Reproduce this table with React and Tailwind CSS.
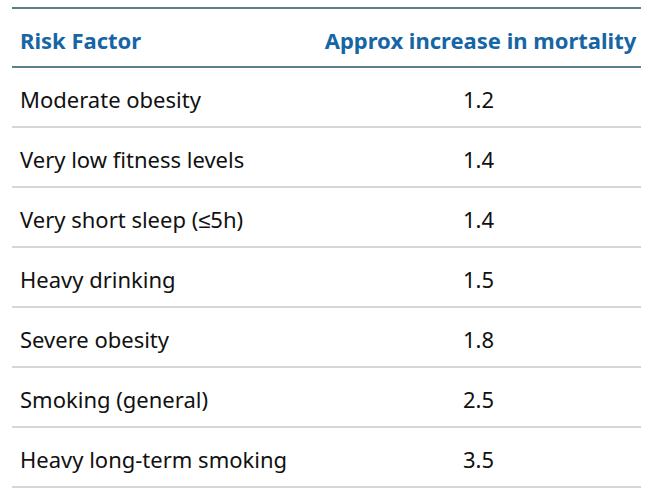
const rows = [
  ['Moderate obesity', '1.2'],
  ['Very low fitness levels', '1.4'],
  ['Very short sleep (≤5h)', '1.4'],
  ['Heavy drinking', '1.5'],
  ['Severe obesity', '1.8'],
  ['Smoking (general)', '2.5'],
  ['Heavy long-term smoking', '3.5'],
];

export default function App() {
  return (
    <div className="h-[500px] w-[657px] bg-white pl-3 pt-[7px] font-['Noto_Sans',sans-serif]">
      <div className="w-[629px]">
        <div className="flex h-[61px] items-center border-y-2 border-[#5c7f8e] pt-[5px] text-[22px] font-bold text-[#1665a5]">
          <div className="w-[304px] pl-2">Risk Factor</div>
          <div className="flex-1 pl-1 text-center">Approx increase in mortality</div>
        </div>
        {rows.map(([name, value]) => (
          <div key={name} className="flex h-[60px] items-center border-b-2 border-[#d6d6d6] pt-[5px] text-[22px] text-[#111]">
            <div className="w-[304px] pl-2">{name}</div>
            <div className="flex-1 text-center">{value}</div>
          </div>
        ))}
      </div>
    </div>
  );
}
